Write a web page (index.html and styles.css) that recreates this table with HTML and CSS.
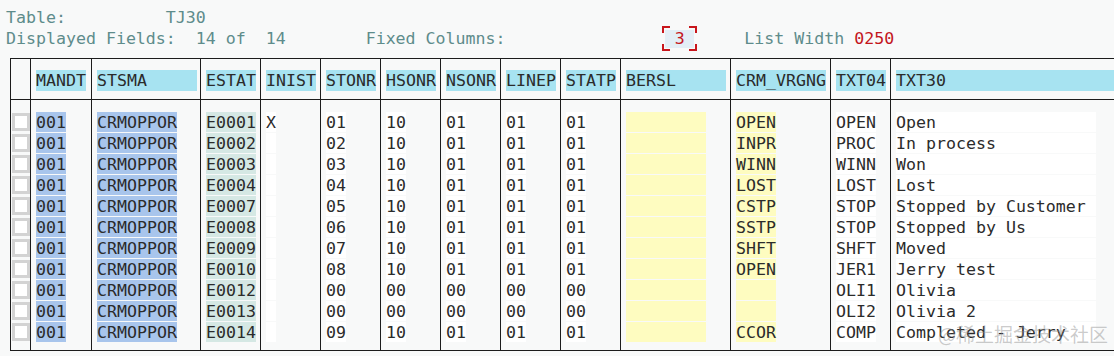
FILE: index.html
```html
<!DOCTYPE html>
<html>
<head>
<meta charset="utf-8">
<link rel="stylesheet" href="styles.css">
</head>
<body>
<div class="info">
<div class="line">Table:          TJ30</div>
<div class="line">Displayed Fields:  14 of  14        Fixed Columns:                <span class="fixed"><span class="fixed-val">3</span></span>     List Width <span class="red">0250</span></div>
</div>
<table class="grid">
<colgroup>
<col class="w-sel"><col class="w-61"><col class="w-109"><col class="w-60"><col class="w-60"><col class="w-60"><col class="w-60"><col class="w-60"><col class="w-60"><col class="w-60"><col class="w-110"><col class="w-100"><col class="w-60"><col class="w-last">
</colgroup>
<thead>
<tr>
<th></th>
<th><span class="hd w5">MANDT</span></th>
<th><span class="hd w10">STSMA</span></th>
<th><span class="hd w5">ESTAT</span></th>
<th><span class="hd w5">INIST</span></th>
<th><span class="hd w5">STONR</span></th>
<th><span class="hd w5">HSONR</span></th>
<th><span class="hd w5">NSONR</span></th>
<th><span class="hd w5">LINEP</span></th>
<th><span class="hd w5">STATP</span></th>
<th><span class="hd w10">BERSL</span></th>
<th><span class="hd w9">CRM_VRGNG</span></th>
<th><span class="hd w5">TXT04</span></th>
<th class="edge"><span class="hd full">TXT30</span></th>
</tr>
</thead>
<tbody id="rows">
</tbody>
</table>
<div class="watermark">@稀土掘金技术社区</div>
<script src="app.js"></script>
</body>
</html>
```
FILE: app.js
```js
var data = [
  ["E0001","X","01","10","01","01","01","OPEN","OPEN","Open"],
  ["E0002","","02","10","01","01","01","INPR","PROC","In process"],
  ["E0003","","03","10","01","01","01","WINN","WINN","Won"],
  ["E0004","","04","10","01","01","01","LOST","LOST","Lost"],
  ["E0007","","05","10","01","01","01","CSTP","STOP","Stopped by Customer"],
  ["E0008","","06","10","01","01","01","SSTP","STOP","Stopped by Us"],
  ["E0009","","07","10","01","01","01","SHFT","SHFT","Moved"],
  ["E0010","","08","10","01","01","01","OPEN","JER1","Jerry test"],
  ["E0012","","00","00","00","00","00","","OLI1","Olivia"],
  ["E0013","","00","00","00","00","00","","OLI2","Olivia 2"],
  ["E0014","","09","10","01","01","01","CCOR","COMP","Completed - Jerry"]
];
var tb = document.getElementById("rows");
var html = "";
data.forEach(function (r, i) {
  var cls = i === 0 ? "first" : (i === data.length - 1 ? "last" : "");
  html += '<tr class="' + cls + '">' +
    '<td class="sel"><span class="cb"></span></td>' +
    '<td><span class="v blue w3">001</span></td>' +
    '<td><span class="v blue w8">CRMOPPOR</span></td>' +
    '<td><span class="v teal w5">' + r[0] + '</span></td>' +
    '<td><span class="v white w1">' + r[1] + '</span></td>' +
    '<td><span class="v white w2">' + r[2] + '</span></td>' +
    '<td><span class="v white w2">' + r[3] + '</span></td>' +
    '<td><span class="v white w2">' + r[4] + '</span></td>' +
    '<td><span class="v white w2">' + r[5] + '</span></td>' +
    '<td><span class="v white w2">' + r[6] + '</span></td>' +
    '<td><span class="v yellow w8"></span></td>' +
    '<td><span class="v yellow w4">' + r[7] + '</span></td>' +
    '<td><span class="v white w4">' + r[8] + '</span></td>' +
    '<td class="edge"><span class="v white w20">' + r[9] + '</span></td>' +
    '</tr>';
});
tb.innerHTML = html;
```
FILE: styles.css
```css
html, body {
  margin: 0;
  padding: 0;
  background: #f8f9f9;
  overflow: hidden;
}
body {
  width: 1114px;
  height: 356px;
  position: relative;
  font-family: "DejaVu Sans Mono", "Liberation Mono", monospace;
  font-size: 16.6px;
  color: #2b2b2b;
}
.info {
  padding: 7px 0 0 6px;
  color: #5e8c8b;
}
.line {
  white-space: pre;
  line-height: 21px;
  height: 21px;
}
.red { color: #c3161c; }
.fixed {
  display: inline-block;
  vertical-align: top;
  width: 35px;
  height: 25px;
  margin: -2px -3px 0 -3px;
  padding: 4px 3px 0 3px;
  box-sizing: border-box;
  background:
    linear-gradient(#c8161c,#c8161c) left top / 8px 2px no-repeat,
    linear-gradient(#c8161c,#c8161c) left top / 2px 7px no-repeat,
    linear-gradient(#c8161c,#c8161c) right top / 8px 2px no-repeat,
    linear-gradient(#c8161c,#c8161c) right top / 2px 7px no-repeat,
    linear-gradient(#c8161c,#c8161c) left bottom / 8px 2px no-repeat,
    linear-gradient(#c8161c,#c8161c) left bottom / 2px 7px no-repeat,
    linear-gradient(#c8161c,#c8161c) right bottom / 8px 2px no-repeat,
    linear-gradient(#c8161c,#c8161c) right bottom / 2px 7px no-repeat;
}
.fixed-val {
  display: block;
  height: 18px;
  line-height: 18px;
  text-align: center;
  background: #e3eef6;
  color: #c3161c;
}
.grid {
  margin: 9px 0 0 10px;
  border-collapse: collapse;
  table-layout: fixed;
  width: 1104px;
}
.w-sel { width: 20px; }
.w-61 { width: 61px; }
.w-109 { width: 109px; }
.w-60 { width: 60px; }
.w-110 { width: 110px; }
.w-100 { width: 100px; }
.w-last { width: 224px; }
.grid th, .grid td {
  border-left: 1px solid #1c1c1c;
  border-right: 1px solid #1c1c1c;
  text-align: left;
  vertical-align: top;
  white-space: pre;
  overflow: hidden;
}
.grid th.edge, .grid td.edge { border-right: none; }
.grid th {
  border-top: 1px solid #1c1c1c;
  border-bottom: 1px solid #1c1c1c;
  padding: 11px 0 8px 5px;
  font-weight: normal;
}
.grid td {
  padding: 0 0 1px 5px;
  line-height: 20px;
}
.grid tr.first td { padding-top: 12px; }
.grid tr.last td { padding-bottom: 8px; }
.grid tbody tr.last td { border-bottom: 1px solid #1c1c1c; }
.grid td.sel { padding-left: 1px; }
.cb {
  display: block;
  width: 18px;
  height: 18px;
  box-sizing: border-box;
  border: 3px solid #d3d3d3;
  background: #ffffff;
  margin-top: 1px;
}
.hd {
  display: inline-block;
  vertical-align: top;
  height: 21px;
  line-height: 22px;
  background: #a7e3f1;
}
.hd.full { width: 100%; }
.w1 { width: 1ch; }
.w2 { width: 2ch; }
.w3 { width: 3ch; }
.w4 { width: 4ch; }
.w5 { width: 5ch; }
.w8 { width: 8ch; }
.w9 { width: 9ch; }
.w10 { width: 10ch; }
.w20 { width: 20ch; }
.v {
  display: inline-block;
  vertical-align: top;
  height: 20px;
  line-height: 21px;
}
.blue { background: #a8c5ec; }
.teal { background: #d5e8e4; }
.yellow { background: #fefcc0; }
.white { background: #ffffff; }
.watermark {
  position: absolute;
  right: 6px;
  bottom: 11px;
  font-family: "Noto Sans CJK SC", sans-serif;
  font-size: 19px;
  line-height: 22px;
  color: rgba(140, 140, 140, 0.45);
}
```
